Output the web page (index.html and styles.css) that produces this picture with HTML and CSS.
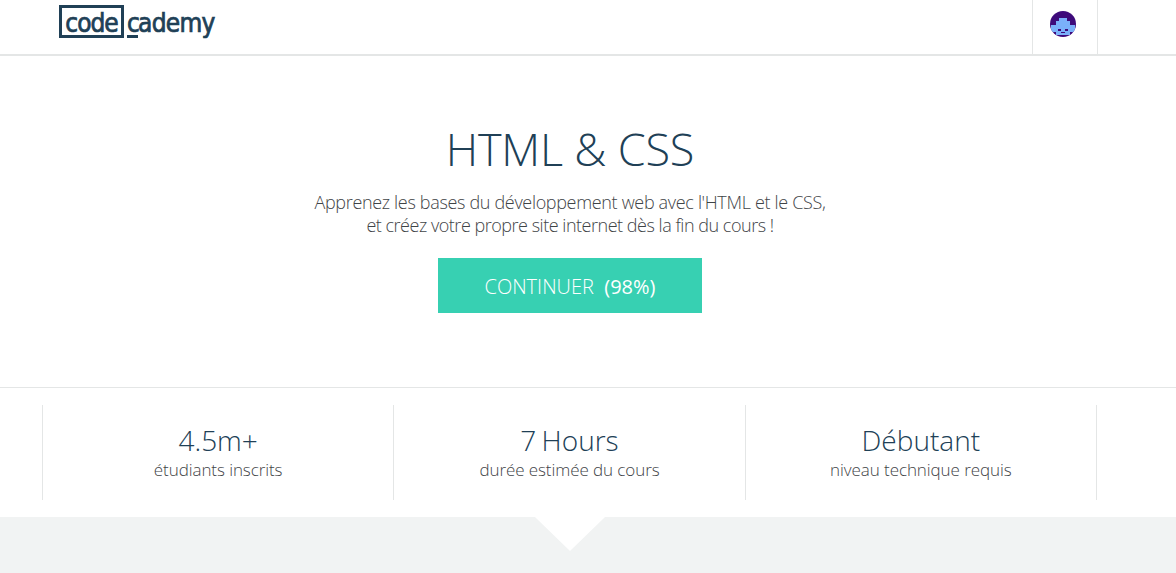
FILE: index.html
```html
<!DOCTYPE html>
<html lang="en">

<head>
  <meta charset="UTF-8">
  <title>HTML &amp; CSS</title>
  <link rel="stylesheet" href="styles.css">
</head>

<body>
  <!-- Header -->
  <header class="header">
    <a class="logo" href="#">
      <span class="logo-box">code</span><span class="logo-rest"><span class="logo-c">c</span>ademy</span>
    </a>
    <div class="user-cell">
      <svg class="avatar" viewBox="0 0 26 26" width="26" height="26">
        <defs>
          <clipPath id="avatar-clip">
            <circle cx="13" cy="13" r="13"></circle>
          </clipPath>
        </defs>
        <circle cx="13" cy="13" r="13" fill="#3d0a7a"></circle>
        <g clip-path="url(#avatar-clip)">
          <path fill="#7ab0fa" d="M9 7h8v3h3v4h5v7h-5v3H6v-3H1v-7h5v-4h3z"></path>
          <path fill="#3d0a7a" d="M8 18h3v2H8zM15 18h3v2h-3zM11 21h4v1h-4z"></path>
        </g>
      </svg>
    </div>
  </header>

  <!-- Hero -->
  <section class="hero">
    <h1 class="hero-title">HTML &amp; CSS</h1>
    <p class="hero-text">Apprenez les bases du développement web avec l'HTML et le CSS,<br><span class="hero-text-second">et créez votre propre site internet dès la fin du cours !</span></p>
    <a class="hero-button" href="#">CONTINUER&nbsp; <span class="hero-percent">(98%)</span></a>
  </section>

  <!-- Stats -->
  <section class="stats">
    <div class="stats-row">
      <div class="stat">
        <div class="stat-value">4.5m+</div>
        <div class="stat-label">étudiants inscrits</div>
      </div>
      <div class="stat">
        <div class="stat-value">7 Hours</div>
        <div class="stat-label">durée estimée du cours</div>
      </div>
      <div class="stat">
        <div class="stat-value">Débutant</div>
        <div class="stat-label">niveau technique requis</div>
      </div>
    </div>
  </section>

  <!-- Grey band with notch -->
  <section class="band">
    <div class="band-notch"></div>
  </section>
</body>

</html>
```

FILE: styles.css
```css
/* Reset Styles */
* {
  margin: 0;
  padding: 0;
  box-sizing: border-box;
}

:root {
  --navy: #204056;
  --text: #3f4447;
  --line: #e4e6e6;
  --band: #f1f3f3;
  --teal: #37d0b2;
}

html,
body {
  height: 573px;
  overflow: hidden;
}

body {
  font-family: "Open Sans", Arial, sans-serif;
  font-weight: 300;
  background: #fff;
  color: var(--text);
}

/* Header Styles */
.header {
  height: 56px;
  border-bottom: 2px solid var(--line);
  display: flex;
  justify-content: space-between;
  padding: 0 78px 0 59px;
}

.logo {
  display: flex;
  align-items: flex-start;
  padding-top: 5px;
  color: var(--navy);
  text-decoration: none;
  font-family: "DejaVu Sans", Arial, sans-serif;
  font-stretch: condensed;
  font-weight: 400;
  font-size: 26px;
  line-height: 30px;
  -webkit-text-stroke: 0.7px var(--navy);
}

.logo-box {
  width: 65px;
  height: 33px;
  border: 3px solid var(--navy);
  text-align: center;
  letter-spacing: -1px;
}

.logo-rest {
  margin-left: 3px;
  padding-top: 3px;
  letter-spacing: -0.7px;
}

.logo-c {
  display: inline-block;
  height: 30px;
  width: 11px;
  border-bottom: 3px solid var(--navy);
}

.user-cell {
  width: 66px;
  height: 54px;
  border-left: 1px solid var(--line);
  border-right: 1px solid var(--line);
  display: flex;
  justify-content: center;
  padding: 11px 4px 0 0;
}

/* Hero Styles */
.hero {
  width: 1140px;
  height: 331px;
  display: flex;
  flex-direction: column;
  align-items: center;
  padding-top: 62px;
}

.hero-title {
  font-size: 45px;
  font-weight: 300;
  line-height: 62px;
  letter-spacing: -0.2px;
  color: var(--navy);
}

.hero-text {
  margin-top: 11px;
  font-size: 18px;
  line-height: 23px;
  letter-spacing: -0.33px;
  text-align: center;
}

.hero-text-second {
  letter-spacing: -0.48px;
}

.hero-button {
  margin-top: 21px;
  width: 264px;
  height: 55px;
  padding-top: 1px;
  background: var(--teal);
  color: #fff;
  text-decoration: none;
  font-size: 20px;
  display: flex;
  align-items: center;
  justify-content: center;
  white-space: pre;
}

.hero-percent {
  font-weight: 400;
}

/* Stats Styles */
.stats {
  height: 130px;
  border-top: 1px solid var(--line);
  padding: 17px 0 17px 42px;
}

.stats-row {
  width: 1055px;
  height: 95px;
  display: grid;
  grid-template-columns: repeat(3, 1fr);
  border-right: 1px solid var(--line);
}

.stat {
  border-left: 1px solid var(--line);
  text-align: center;
  padding-top: 16px;
}

.stat-value {
  font-size: 28px;
  line-height: 38px;
  word-spacing: -2px;
  color: var(--navy);
}

.stat-label {
  font-size: 17px;
  line-height: 22px;
  letter-spacing: -0.08px;
}

/* Band Styles */
.band {
  height: 56px;
  background: var(--band);
  display: flex;
  justify-content: center;
  padding-right: 36px;
}

.band-notch {
  width: 70px;
  height: 34px;
  background: #fff;
  clip-path: polygon(0 0, 100% 0, 50% 100%);
}
```
